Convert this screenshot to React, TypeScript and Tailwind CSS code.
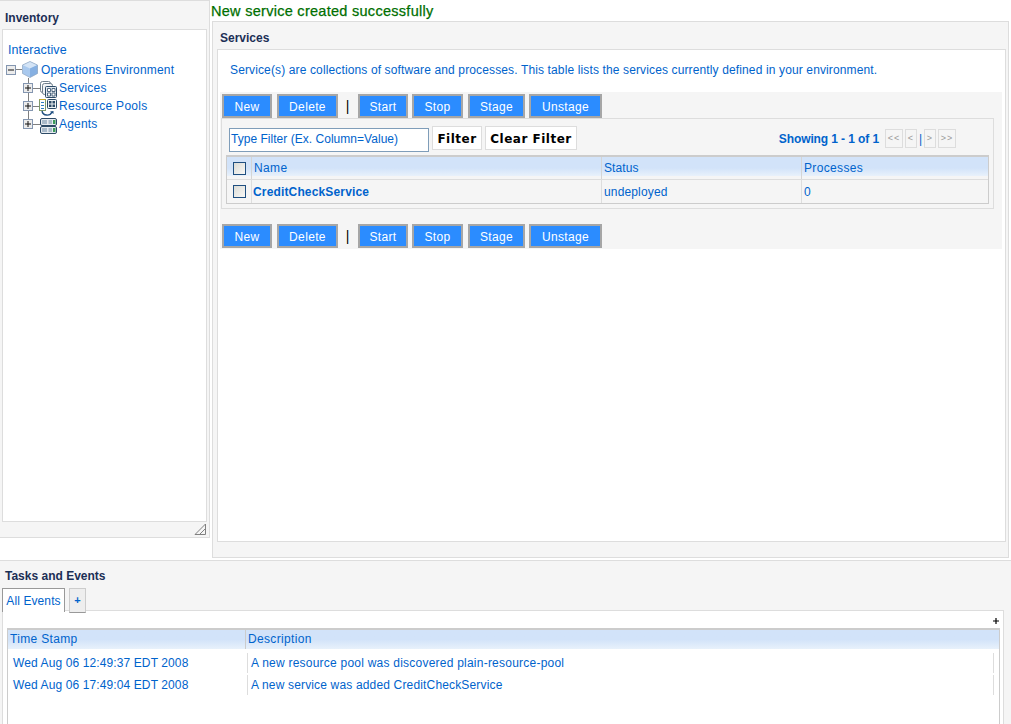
const font = { fontFamily: '"Liberation Sans", Arial, sans-serif' };
const boldWide = { fontFamily: '"DejaVu Sans", Verdana, sans-serif' };

function ActionButton({ label, width }: { label: string; width: string }) {
  return (
    <button className={`${width} h-[24px] pt-[2px] bg-[#2b8cff] border-2 border-[#a6a6a6] text-white text-[12px] tracking-[0.35px] leading-none`}>
      {label}
    </button>
  );
}

function ActionBar() {
  return (
    <div className="flex items-center h-[24px]">
      <ActionButton label="New" width="w-[50px]" />
      <div className="w-[5px]" />
      <ActionButton label="Delete" width="w-[61px]" />
      <div className="w-[20px] pl-[7.7px] text-black text-[14px] leading-none">|</div>
      <ActionButton label="Start" width="w-[50px]" />
      <div className="w-[4px]" />
      <ActionButton label="Stop" width="w-[51px]" />
      <div className="w-[5px]" />
      <ActionButton label="Stage" width="w-[57px]" />
      <div className="w-[4px]" />
      <ActionButton label="Unstage" width="w-[73px]" />
    </div>
  );
}

function Checkbox() {
  return <div className="w-[13px] h-[13px] border border-[#1f4f80] bg-gradient-to-br from-[#dcdcd6] to-[#f8f8f6]" />;
}

function Expander({ minus }: { minus?: boolean }) {
  return (
    <svg width="10" height="10" viewBox="0 0 10 10" className="block relative shrink-0">
      <rect x="0.5" y="0.5" width="9" height="9" fill="#ececec" stroke="#8496b0" />
      <path d="M2 5h6" stroke="#111" strokeWidth="1" />
      {!minus && <path d="M5 2v6" stroke="#111" strokeWidth="1" />}
    </svg>
  );
}

function CubeIcon() {
  return (
    <svg width="16" height="17" viewBox="0 0 16 17" className="block shrink-0">
      <path d="M8 0.500l7.500 3.500v8.500L8 16.500 0.500 12.500V4z" fill="#a9c9ee" />
      <path d="M0.500 4L8 0.500 15.500 4 8 7.500z" fill="#d4e4f6" />
      <path d="M8 7.500v9l7.500-4V4z" fill="#86b0e2" />
      <path d="M8 0.500l7.500 3.500v8.500L8 16.500 0.500 12.500V4z" fill="none" stroke="#8fa6c2" strokeWidth="0.7" />
    </svg>
  );
}

function ServicesIcon() {
  return (
    <svg width="17" height="17" viewBox="0 0 17 17" className="block shrink-0">
      <rect x="0.5" y="0.5" width="10" height="11" rx="2" fill="#fff" stroke="#6f7f8c" />
      <rect x="2.5" y="2.5" width="10" height="11" rx="2" fill="#f2f4f6" stroke="#6f7f8c" />
      <rect x="5.5" y="5.5" width="11" height="11" rx="1" fill="#e4eaf0" stroke="#2c4a66" />
      <path d="M7.500 7.500h3v3h-3zM12 7.500h3v3h-3zM7.500 12h3v3h-3zM12 12h3v3h-3z" fill="#fff" stroke="#2c4a66" strokeWidth="0.8" />
    </svg>
  );
}

function PoolsIcon() {
  return (
    <svg width="18" height="17" viewBox="0 0 18 17" className="block shrink-0 -ml-[1px]">
      <rect x="0.5" y="0.5" width="6" height="11" fill="#fff" stroke="#7f9a6a" />
      <path d="M0.500 0.500h6" stroke="#c9a92c" />
      <path d="M2 3.500h3M2 6.500h3M2 9.500h3" stroke="#2f7fc0" />
      <rect x="8.5" y="0.5" width="9" height="9" rx="1" fill="#eef2f5" stroke="#2c4a66" />
      <path d="M10 2h2.500v2.500H10zM13.500 2H16v2.500h-2.500zM10 5.500h2.500V8H10zM13.500 5.500H16V8h-2.500z" fill="#2c4a66" />
      <path d="M3 12c1 5 8 5.500 10 1" fill="none" stroke="#1f4f80" strokeWidth="1.4" />
      <path d="M11 12.500l3.500-0.500 0 3z" fill="#1f4f80" />
    </svg>
  );
}

function AgentsIcon() {
  return (
    <svg width="17" height="16" viewBox="0 0 17 16" className="block shrink-0">
      <rect x="0.5" y="0.5" width="16" height="7" rx="1.5" fill="#e6ebf0" stroke="#2c4a66" />
      <rect x="0.5" y="8.5" width="16" height="7" rx="1.5" fill="#e6ebf0" stroke="#2c4a66" />
      <rect x="2" y="2" width="5" height="4" fill="#a9bac9" />
      <rect x="2" y="10" width="5" height="4" fill="#a9bac9" />
      <rect x="8.5" y="2" width="3.5" height="4" fill="#a9bac9" />
      <rect x="8.5" y="10" width="3.5" height="4" fill="#a9bac9" />
      <rect x="13" y="2" width="2.500" height="4" fill="#3a9a5a" />
      <rect x="13" y="10" width="2.500" height="4" fill="#3a9a5a" />
    </svg>
  );
}

function TreeRow({ icon, label, tracking, lower }: { icon: React.ReactNode; label: string; tracking: string; lower: string }) {
  return (
    <div className="flex items-center h-[18px] pl-[20px]">
      <Expander />
      <div className="w-[7px] h-px bg-[#7f7f7f] shrink-0" />
      <div className={`w-[17px] shrink-0 flex ${lower}`}>{icon}</div>
      <span className={`ml-[2px] text-[#0063cc] text-[12px] ${tracking} whitespace-nowrap`}>{label}</span>
    </div>
  );
}

function Tree() {
  return (
    <div className="relative">
      <div className="absolute left-[25px] top-[18px] w-px h-[42px] bg-[#7f7f7f]" />
      <div className="flex items-center h-[19px] pl-[3px]">
        <Expander minus />
        <div className="w-[6px] h-px bg-[#7f7f7f] shrink-0" />
        <CubeIcon />
        <span className="ml-[3px] text-[#0063cc] text-[12px] tracking-[0.17px] whitespace-nowrap">Operations Environment</span>
      </div>
      <TreeRow icon={<ServicesIcon />} label="Services" tracking="tracking-[0.2px]" lower="mt-[2px]" />
      <TreeRow icon={<PoolsIcon />} label="Resource Pools" tracking="tracking-[0.27px]" lower="mt-[2px]" />
      <TreeRow icon={<AgentsIcon />} label="Agents" tracking="tracking-[0.2px]" lower="mt-[4px]" />
    </div>
  );
}

function Inventory() {
  return (
    <div className="w-[210px] h-[538px] shrink-0 bg-[#f5f5f5] border border-[#dddddd] border-l-0 flex flex-col">
      <div className="h-[28px] flex items-center pl-[5px] pt-[5px] text-[12px] font-bold text-[#1c2f55]">Inventory</div>
      <div className="mx-[2px] h-[493px] bg-white border border-[#dddddd] pt-[11px]">
        <div className="pl-[5px] mb-[1px] text-[#0063cc] text-[12.5px] leading-[18px] tracking-[0.1px]">Interactive</div>
        <Tree />
      </div>
      <div className="flex-1 relative">
        <svg width="12" height="12" viewBox="0 0 12 12" className="absolute right-[3px] top-[1px]">
          <path d="M1 11.500L11.500 1v10.500zM5.500 11.500l6-6" fill="none" stroke="#808080" />
        </svg>
      </div>
    </div>
  );
}

function PageButton({ label, width }: { label: string; width: string }) {
  return (
    <div className={`${width} h-[19px] border border-[#dddddd] flex items-center justify-center text-[#999999] text-[9px] tracking-[1px]`}>
      {label}
    </div>
  );
}

function ServicesTable() {
  return (
    <div className="ml-[4px] mr-[4px] border border-[#cccccc] border-t-2 text-[12px] text-[#0063cc]">
      <div className="flex h-[23px] bg-[linear-gradient(to_bottom,#d2e3f9_50%,#e8f1fb_86%,#f5f5f5_86%)] border-b border-[#dddddd] tracking-[0.35px]">
        <div className="w-[25px] pl-[1px] flex items-center justify-center border-r border-[#d5d5d5]"><Checkbox /></div>
        <div className="w-[350px] flex items-center pl-[2px] border-r border-[#d5d5d5]">Name</div>
        <div className="w-[200px] flex items-center pl-[2px] border-r border-[#d5d5d5] tracking-[0.1px]">Status</div>
        <div className="flex-1 flex items-center pl-[2px]">Processes</div>
      </div>
      <div className="flex h-[23px] bg-[#f5f5f5]">
        <div className="w-[25px] pl-[1px] flex items-center justify-center border-r border-[#dddddd]"><Checkbox /></div>
        <div className="w-[350px] flex items-center pl-[1px] border-r border-[#dddddd] font-bold tracking-[0.15px]">CreditCheckService</div>
        <div className="w-[200px] flex items-center pl-[2px] border-r border-[#dddddd] tracking-[0.15px]">undeployed</div>
        <div className="flex-1 flex items-center pl-[2px]">0</div>
      </div>
    </div>
  );
}

function Services() {
  return (
    <div className="flex-1 flex flex-col">
      <div className="h-[21px] pl-[1px] pt-[3px] text-[14.5px] leading-[17px] tracking-[0.28px] text-[#006f00] [-webkit-text-stroke:0.25px_#006f00]">New service created successfully</div>
      <div className="ml-[2px] mr-[2px] h-[537px] bg-[#f5f5f5] border border-[#dddddd] px-[4px]">
        <div className="h-[27px] flex items-center pl-[3px] pt-[5px] text-[12px] font-bold text-[#1c2f55]">Services</div>
        <div className="h-[493px] mr-[-2px] bg-white border border-[#dddddd] pl-[2px] pr-[3px]">
          <div className="h-[42px] flex items-center pb-[2px] pl-[10px] text-[12px] tracking-[0.13px] text-[#0063cc] whitespace-nowrap">
            Service(s) are collections of software and processes. This table lists the services currently defined in your environment.
          </div>
          <div className="bg-[#f5f5f5] h-[157px] pt-[2px] pl-[2px]">
            <ActionBar />
            <div className="-ml-[1px] mr-[8px] h-[91px] border border-[#dddddd]">
              <div className="flex items-start h-[36px] pl-[7px]">
                <div className="mt-[9px] w-[200px] h-[24px] bg-white border border-[#7f9db9] pl-[1px] pb-[3px] flex items-center text-[12px] tracking-[0.03px] text-[#0063cc] whitespace-nowrap">Type Filter (Ex. Column=Value)</div>
                <button style={boldWide} className="ml-[3px] mt-[7px] w-[50px] h-[24px] pt-[1px] bg-white border border-[#dddddd] text-[12px] font-bold tracking-[0.5px] text-black">Filter</button>
                <button style={boldWide} className="ml-[3px] mt-[7px] w-[92px] h-[24px] pt-[1px] bg-white border border-[#dddddd] text-[12px] font-bold tracking-[0.5px] text-black whitespace-nowrap">Clear Filter</button>
                <div className="ml-auto mt-[10px] flex items-center pr-[37px]">
                  <span className="text-[12px] font-bold text-[#0063cc] mr-[6px] tracking-[-0.1px]">Showing 1 - 1 of 1</span>
                  <PageButton label="<<" width="w-[18px]" />
                  <div className="w-[2px]" />
                  <PageButton label="<" width="w-[12px]" />
                  <div className="w-[7px] flex justify-center text-[#0063cc] text-[12px]">|</div>
                  <PageButton label=">" width="w-[12px]" />
                  <div className="w-[2px]" />
                  <PageButton label=">>" width="w-[18px]" />
                </div>
              </div>
              <ServicesTable />
            </div>
            <div className="h-[15px]" />
            <ActionBar />
          </div>
        </div>
      </div>
    </div>
  );
}

function EventRow({ time, text, tracking }: { time: string; text: string; tracking: string }) {
  return (
    <div className="flex h-[22px] items-center text-[12px] text-[#0063cc]">
      <div className="w-[239px] pl-[5px] tracking-[0.11px] whitespace-nowrap">{time}</div>
      <div className={`flex-1 h-[20px] border-l border-[#dddddd] pl-[3px] flex items-center ${tracking} whitespace-nowrap`}>{text}</div>
      <div className="w-px h-[20px] bg-[#dddddd] mr-[5px]" />
    </div>
  );
}

function TasksEvents() {
  return (
    <div className="h-[164px] bg-[#f5f5f5] border-t border-[#dddddd] overflow-hidden">
      <div className="h-[27px] flex items-end pb-[4px] pl-[5px] text-[12px] font-bold text-[#1c2f55] leading-[16px]">Tasks and Events</div>
      <div className="flex items-start pl-[2px] h-[22px] relative z-10">
        <div className="w-[63px] h-[24px] bg-white border border-[#999999] border-b-0 flex items-center justify-center text-[12px] tracking-[0.1px] text-[#0063cc]">All Events</div>
        <div className="ml-[4px] w-[17px] h-[25px] bg-[#eeeeee] border border-[#cccccc] border-b-[#999999] flex items-center justify-center text-[11px] font-bold text-[#0063cc]">+</div>
      </div>
      <div className="ml-[2px] w-[1002px] h-[120px] bg-white border border-[#dddddd]">
        <div className="h-[17px] pt-[7px] flex justify-end pr-[4px]">
          <svg width="6" height="6" viewBox="0 0 6 6" className="block">
            <path d="M3 0v6M0 3h6" stroke="#000" strokeWidth="1.2" />
          </svg>
        </div>
        <div className="ml-[4px] mr-[3px] h-[100px] border-l border-r border-t-2 border-[#cccccc]">
          <div className="flex h-[19px] bg-gradient-to-b from-[#d2e3f9] from-[50%] to-[#e8f1fb] text-[12px] tracking-[0.33px] text-[#0063cc]">
            <div className="w-[238px] pl-[2px] pb-[2px] flex items-center border-r border-[#cccccc]">Time Stamp</div>
            <div className="flex-1 pl-[2px] pb-[2px] flex items-center">Description</div>
          </div>
          <div className="pt-[3px]">
            <EventRow time="Wed Aug 06 12:49:37 EDT 2008" text="A new resource pool was discovered plain-resource-pool" tracking="tracking-[0.23px]" />
            <EventRow time="Wed Aug 06 17:49:04 EDT 2008" text="A new service was added CreditCheckService" tracking="tracking-[0.16px]" />
          </div>
        </div>
      </div>
    </div>
  );
}

export default function App() {
  return (
    <div className="w-[1011px] h-[724px] bg-white overflow-hidden" style={font}>
      <div className="flex h-[560px]">
        <Inventory />
        <Services />
      </div>
      <TasksEvents />
    </div>
  );
}
